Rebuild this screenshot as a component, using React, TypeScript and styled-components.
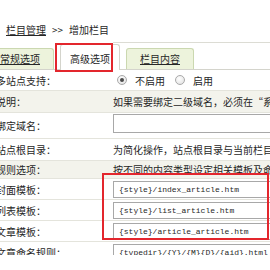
import styled, { createGlobalStyle } from 'styled-components';

const GlobalStyle = createGlobalStyle`
  body {
    margin: 0;
    background: #fff;
    color: #262626;
    font-family: 'Noto Sans CJK SC', 'Noto Sans', sans-serif;
    font-size: 10px;
  }
`;

const Frame = styled.div`
  position: relative;
  width: 270px;
  height: 255px;
  overflow: hidden;
`;

const Breadcrumb = styled.div`
  display: flex;
  align-items: center;
  gap: 6px;
  height: 16px;
  padding: 22px 0 0 6px;
  line-height: 16px;
`;

const CrumbLink = styled.span`
  text-decoration: underline;
`;

const TabBar = styled.div`
  display: flex;
  align-items: flex-end;
  gap: 6px;
  height: 27px;
  margin: 4px 0 0 -14px;
  border-bottom: 1px solid #d4d4cc;
  background: linear-gradient(#dcdcd4, #dcdcd4) no-repeat 127px 0 / 100% 1px;
`;

const Tab = styled.div<{ $active?: boolean }>`
  box-sizing: border-box;
  height: ${({ $active }) => ($active ? '26px' : '21px')};
  margin-bottom: ${({ $active }) => ($active ? '-1px' : '0')};
  padding: ${({ $active }) => ($active ? '4px 9px 0' : '0 13px')};
  line-height: ${({ $active }) => ($active ? '20px' : '20px')};
  background: ${({ $active }) => ($active ? '#fff' : '#edf3dc')};
  border: 1px solid ${({ $active }) => ($active ? '#d4d4cc' : '#cbd8b0')};
  border-bottom: none;
  border-radius: 3px 3px 0 0;
  white-space: nowrap;
  text-decoration: ${({ $active }) => ($active ? 'none' : 'underline')};
`;

const Row = styled.div<{ $height: number; $shaded?: boolean }>`
  box-sizing: border-box;
  display: grid;
  grid-template-columns: 113px 1fr;
  align-items: center;
  height: ${({ $height }) => $height}px;
  background: ${({ $shaded }) => ($shaded ? '#f3f3ec' : '#fff')};
  border-bottom: 1px solid #e4e4dc;
`;

const Label = styled.div`
  margin-left: -4px;
  white-space: nowrap;
`;

const Value = styled.div`
  display: flex;
  align-items: center;
  white-space: nowrap;
  overflow: hidden;
`;

const RadioGroup = styled.div`
  display: flex;
  align-items: center;
  gap: 8px;
  padding-left: 4px;
`;

const Radio = styled.span<{ $checked?: boolean }>`
  box-sizing: border-box;
  display: inline-flex;
  align-items: center;
  justify-content: center;
  width: 10px;
  height: 10px;
  border: 1px solid #a9a9a9;
  border-radius: 50%;
  background: radial-gradient(circle at 40% 35%, #fff, #dedede);
  &::after {
    content: '';
    width: 4px;
    height: 4px;
    border-radius: 50%;
    background: ${({ $checked }) => ($checked ? '#4a4a4a' : 'transparent')};
  }
`;

const RadioText = styled.span`
  margin-right: 2px;
`;

const TextInput = styled.div<{ $offset?: number }>`
  box-sizing: border-box;
  width: 200px;
  height: ${({ $offset }) => ($offset ? '19px' : '17px')};
  margin-bottom: ${({ $offset }) => $offset || 0}px;
  padding-left: 5px;
  border: 1px solid #a8a8a8;
  border-right: none;
  background: #fff;
  font-family: 'Liberation Mono', 'DejaVu Sans Mono', monospace;
  font-size: 8px;
  line-height: 15px;
  color: #1f1f1f;
  white-space: nowrap;
`;

const Annotation = styled.div<{ $left: number; $top: number; $w: number; $h: number }>`
  position: absolute;
  left: ${({ $left }) => $left}px;
  top: ${({ $top }) => $top}px;
  width: ${({ $w }) => $w}px;
  height: ${({ $h }) => $h}px;
  box-sizing: border-box;
  border: 2px solid #e3262d;
  pointer-events: none;
`;

const templates = [
  { label: '封面模板：', value: '{style}/index_article.htm' },
  { label: '列表模板：', value: '{style}/list_article.htm' },
  { label: '文章模板：', value: '{style}/article_article.htm' },
];

export default function App() {
  return (
    <>
      <GlobalStyle />
      <Frame>
        <Breadcrumb>
          <CrumbLink>栏目管理</CrumbLink>
          <span>&gt;&gt;</span>
          <span>增加栏目</span>
        </Breadcrumb>

        <TabBar>
          <Tab>常规选项</Tab>
          <Tab $active>高级选项</Tab>
          <Tab>栏目内容</Tab>
        </TabBar>

        <Row $height={21}>
          <Label>多站点支持：</Label>
          <RadioGroup>
            <Radio $checked />
            <RadioText>不启用</RadioText>
            <Radio />
            <RadioText>启用</RadioText>
          </RadioGroup>
        </Row>
        <Row $height={22} $shaded>
          <Label>说明：</Label>
          <Value>如果需要绑定二级域名，必须在“系统参数”中设定“支持多站点”。</Value>
        </Row>
        <Row $height={26}>
          <Label>绑定域名：</Label>
          <TextInput $offset={4} />
        </Row>
        <Row $height={22}>
          <Label>站点根目录：</Label>
          <Value>为简化操作，站点根目录与当前栏目目录一致</Value>
        </Row>
        <Row $height={18} $shaded>
          <Label>规则选项：</Label>
          <Value>按不同的内容类型设定相关模板及命名规则</Value>
        </Row>
        {templates.map((t) => (
          <Row $height={21} key={t.label}>
            <Label>{t.label}</Label>
            <TextInput>{t.value}</TextInput>
          </Row>
        ))}
        <Row $height={21}>
          <Label>文章命名规则：</Label>
          <TextInput>{'{typedir}/{Y}/{M}{D}/{aid}.html'}</TextInput>
        </Row>

        <Annotation $left={55} $top={43} $w={58} $h={29} />
        <Annotation $left={102} $top={173} $w={167} $h={67} />
      </Frame>
    </>
  );
}
